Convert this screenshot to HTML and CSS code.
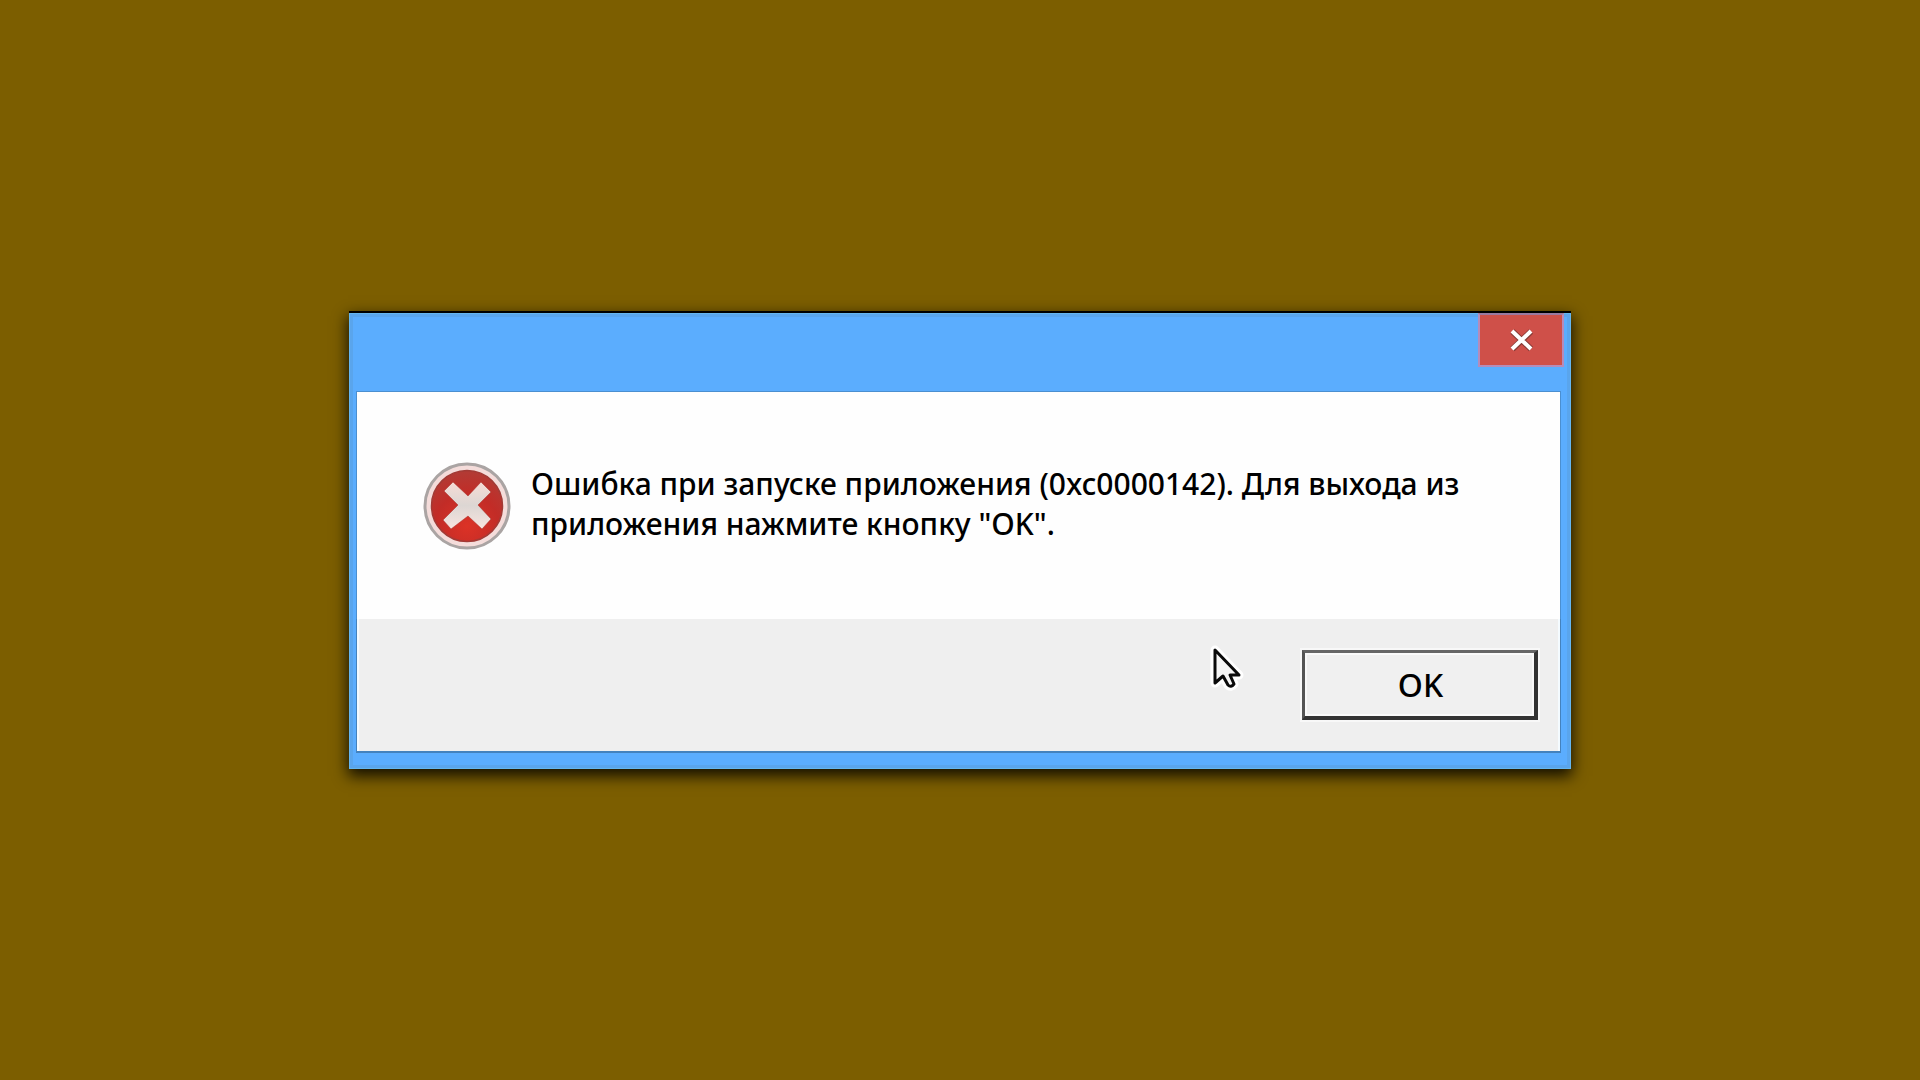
FILE: index.html
```html
<!DOCTYPE html>
<html lang="ru">
<head>
<meta charset="utf-8">
<meta name="viewport" content="width=device-width, initial-scale=1">
<title>Ошибка приложения</title>
<link rel="stylesheet" href="styles.css">
</head>
<body>
<main class="window" role="alertdialog" aria-describedby="message">
  <header class="titlebar">
    <button class="close" type="button" aria-label="Закрыть">
      <svg class="close-icon" viewBox="0 0 24 24" aria-hidden="true"><path d="M2.500 3.500 21 21M21 3.500 2.500 21" fill="none" stroke="#873b36" stroke-width="6"/><path d="M2 3 21 21M21 3 2 21" fill="none" stroke="#fff" stroke-width="4"/></svg>
    </button>
  </header>
  <section class="content">
    <svg class="error-icon" viewBox="0 0 88 88" aria-hidden="true">
      <defs>
        <radialGradient id="red" cx="50%" cy="78%" r="75%">
          <stop offset="0" stop-color="#dc3226"/>
          <stop offset=".6" stop-color="#c22c27"/>
          <stop offset="1" stop-color="#b33a34"/>
        </radialGradient>
        <linearGradient id="cross" x1="0" y1="0" x2="0" y2="1">
          <stop offset="0" stop-color="#f6dcd5"/>
          <stop offset=".5" stop-color="#dcd6d3"/>
          <stop offset="1" stop-color="#f8e4df"/>
        </linearGradient>
      </defs>
      <circle cx="44" cy="44" r="42" fill="#f4dcda" stroke="#aaa4a3" stroke-width="3"/>
      <circle cx="44" cy="44" r="35.500" fill="url(#red)" stroke="#a23a35" stroke-width="1.500"/>
      <path d="M30 20 45 34 58 20 68 30 55 43 68 57 59 67 45 54 28 67 20 58 35 43 21 29Z" fill="url(#cross)" stroke="#a82e28" stroke-opacity=".5"/>
    </svg>
    <p class="message" id="message">Ошибка при запуске приложения (0xc0000142). Для выхода из приложения нажмите кнопку "OK".</p>
  </section>
  <footer class="actions">
    <button class="ok" type="button">OK</button>
    <svg class="cursor" viewBox="0 0 34 50" aria-hidden="true"><path d="M5 5V38L13 31 18 40Q21 43 24 39L20 30H29Z" fill="#fff" stroke="#fff" stroke-width="9" stroke-linejoin="round"/><path d="M5 5V38L13 31 18 40Q21 43 24 39L20 30H29Z" fill="#f6f6f6" stroke="#0a0a0a" stroke-width="3" stroke-linejoin="round"/></svg>
  </footer>
</main>
</body>
</html>
```
FILE: styles.css
```css
* {
  box-sizing: border-box;
}

body {
  margin: 0;
  min-height: 100vh;
  display: flex;
  align-items: center;
  justify-content: center;
  background: #7c5e00;
  color: #000;
  font-family: "Noto Sans", "Open Sans", sans-serif;
}

.window {
  width: 100%;
  max-width: 1222px;
  padding: 0 11px 18px 8px;
  border-top: 2px solid #000;
  background: #5badfe;
  box-shadow: inset 0 0 0 1px #65b6ef, inset 0 0 0 4px #5aa5ec, 0 6px 14px 1px rgba(0, 0, 0, .85);
}

.titlebar {
  display: flex;
  justify-content: flex-end;
  height: 79px;
}

.close {
  width: 86px;
  height: 54px;
  margin-right: -4px;
  padding: 0 0 0 2px;
  display: flex;
  align-items: center;
  justify-content: center;
  border: 2px solid #b58cba;
  border-top-color: #9a7aa0;
  background: #cf5049;
}

.close-icon {
  width: 24px;
  height: 24px;
}

.content {
  min-height: 227px;
  padding: 32px 66px;
  display: flex;
  align-items: center;
  gap: 20px;
  background: #fefefe;
  box-shadow: 0 0 0 1px #4b8fd0;
}

.error-icon {
  flex: none;
  width: 88px;
  height: 88px;
}

.message {
  margin: 0;
  padding-bottom: 4px;
  font-size: 30px;
  font-weight: 500;
  line-height: 40px;
}

.actions {
  position: relative;
  padding: 31px 20px;
  display: flex;
  justify-content: flex-end;
  border: solid #f4fbff;
  border-width: 0 2px;
  background: #efefef;
  box-shadow: 0 1px 0 1px #4482bd;
}

.ok {
  width: 236px;
  height: 70px;
  padding: 0 0 0 2px;
  border: solid #333;
  border-width: 3px 4px 4px 3px;
  border-color: #666 #333 #333 #555;
  background: #f0f0f0;
  box-shadow: inset 0 0 0 2px #fafafa, 0 0 0 2px #f8f8f8;
  color: #000;
  font: 500 32px/40px "Noto Sans", "Open Sans", sans-serif;
}

.cursor {
  position: absolute;
  top: 26px;
  right: 314px;
  width: 34px;
  height: 50px;
}
```
